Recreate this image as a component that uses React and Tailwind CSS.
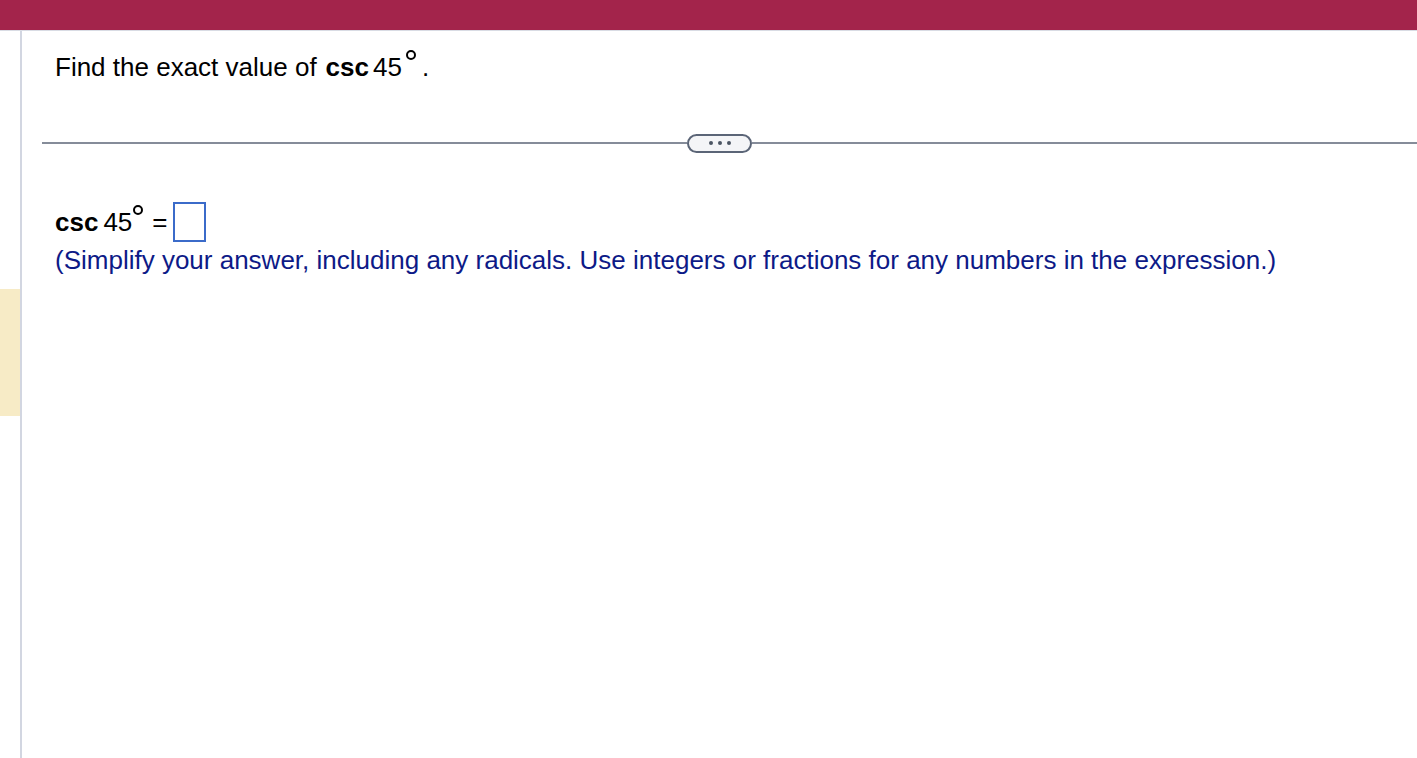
import React from 'react';

function Deg({ className = '' }) {
  return <span className={`inline-block align-top -mt-[2px] w-[10px] h-[10px] rounded-full border-2 border-current ${className}`} />;
}

export default function App() {
  return (
    <div className="w-[1417px] h-[758px] overflow-hidden bg-white font-['Liberation_Sans',Arial,sans-serif]">
      <div className="h-[30px] bg-[#a3244b]" />
      <div className="h-[1px] bg-[#d9dce4]" />
      <div className="flex h-[727px]">
        <div className="w-[20px] shrink-0 pt-[258px]">
          <div className="h-[127px] bg-[#f7ebc6]" />
        </div>
        <div className="w-[2px] shrink-0 bg-[#d2d6e1]" />
        <div className="flex-1 pl-[33px] pt-[21px]">
          <p className="text-[26px] leading-[30px] text-black">
            Find the exact value of<span className="ml-[9px] font-bold">csc</span>
            <span className="ml-[4px]">45</span><Deg className="ml-[4px]" /><span className="ml-[6px]">.</span>
          </p>
          <div className="mt-[51px] -ml-[13px] h-[20px] flex items-center">
            <div className="h-[2px] w-[645px] bg-[#858c99]" />
            <div className="h-[19px] w-[65px] shrink-0 rounded-full border-2 border-[#5b6577] bg-[#f4f5f7] flex items-center justify-center gap-[5px]">
              <span className="w-[4px] h-[4px] rounded-full bg-[#4b5563]" />
              <span className="w-[4px] h-[4px] rounded-full bg-[#4b5563]" />
              <span className="w-[4px] h-[4px] rounded-full bg-[#4b5563]" />
            </div>
            <div className="h-[2px] flex-1 bg-[#858c99]" />
          </div>
          <div className="mt-[49px] flex items-center text-[26px] leading-[30px] text-black">
            <span className="font-bold">csc</span>
            <span className="ml-[5px] flex items-start">45<Deg className="ml-[1px]" /></span>
            <span className="ml-[9px]">=</span>
            <span className="ml-[5px] inline-block w-[33px] h-[40px] border-2 border-[#3b6bc9]" />
          </div>
          <p className="mt-[3px] text-[26px] leading-[30px] text-[#0d1a87]">
            (Simplify your answer, including any radicals. Use integers or fractions for any numbers in the expression.)
          </p>
        </div>
      </div>
    </div>
  );
}
